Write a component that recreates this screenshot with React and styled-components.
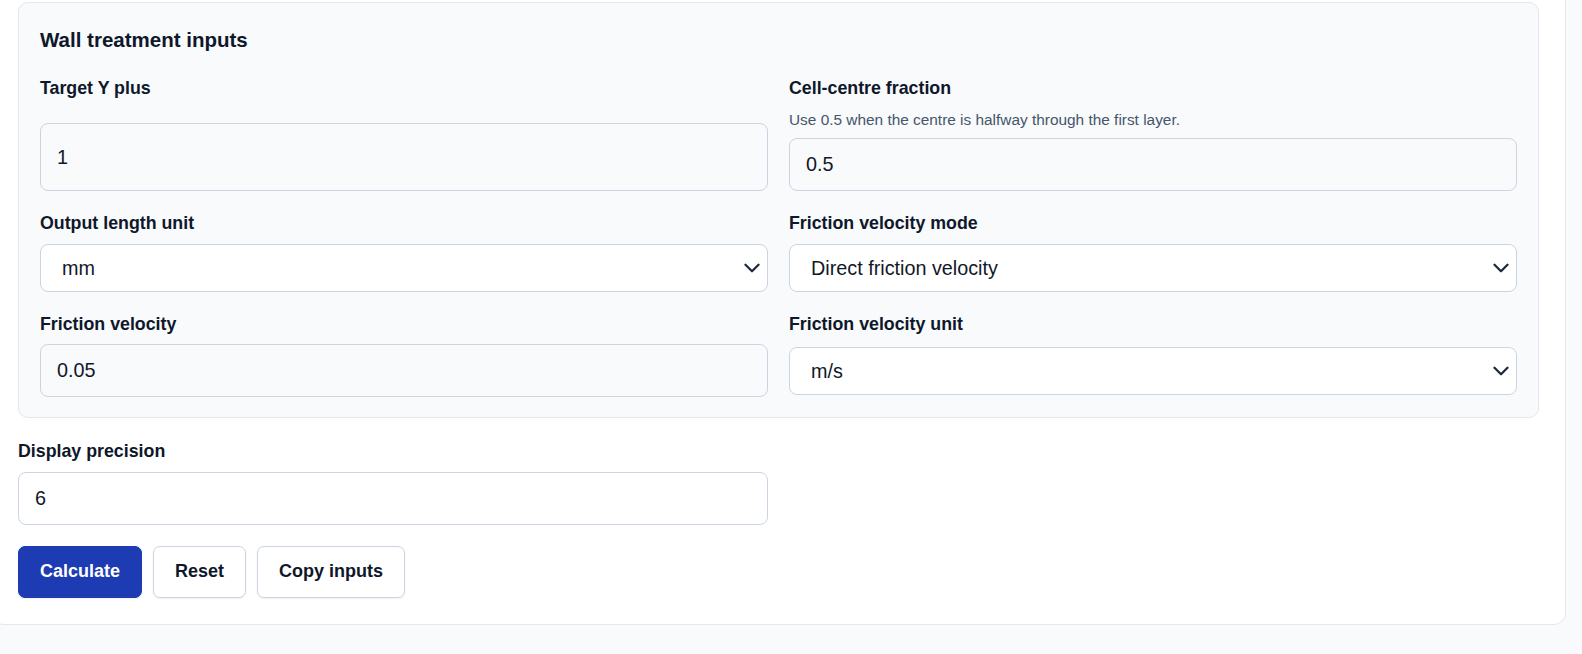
import React from "react";
import styled, { createGlobalStyle } from "styled-components";

const GlobalStyle = createGlobalStyle`
  html, body {
    margin: 0;
    padding: 0;
    background: #f8fafc;
    overflow: hidden;
  }
  body {
    font-family: "Liberation Sans", Arial, sans-serif;
    color: #0f172a;
  }
  *, *::before, *::after { box-sizing: border-box; }
`;

const Page = styled.div`
  padding: 0 16px 0 0;
  min-height: 654px;
`;

const Card = styled.section`
  margin: -25px 0 0 -9px;
  background: #ffffff;
  border: 1px solid #e2e8f0;
  border-radius: 12px;
  padding: 26px 26px 26px;
  display: grid;
  grid-template-columns: 1fr 1fr;
  column-gap: 21px;
  row-gap: 21px;
`;

const Panel = styled.div`
  grid-column: 1 / -1;
  background: #f8fafc;
  border: 1px solid #e2e8f0;
  border-radius: 10px;
  padding: 21px 21px 20px;
  display: flex;
  flex-direction: column;
  gap: 20px;
`;

const PanelTitle = styled.h3`
  margin: 0;
  font-size: 20.5px;
  font-weight: 700;
  line-height: 32px;
  color: #0f172a;
`;

const FieldGrid = styled.div`
  display: grid;
  grid-template-columns: 1fr 1fr;
  column-gap: 21px;
  row-gap: 20px;
`;

const Field = styled.label`
  display: grid;
  gap: 8px;
  min-width: 0;
`;

const Label = styled.span`
  font-size: 17.8px;
  font-weight: 700;
  line-height: 24.6px;
  color: #0f172a;
`;

const Hint = styled.span`
  font-size: 15.4px;
  line-height: 1.4;
  color: #475569;
`;

const TextInput = styled.input`
  width: 100%;
  min-height: 53px;
  padding: 0 16px;
  font-family: inherit;
  font-size: 19.8px;
  color: #111827;
  background: transparent;
  border: 1px solid #cbd5e1;
  border-radius: 8px;
  outline: none;
`;

const SelectWrap = styled.div`
  position: relative;
  align-self: start;
`;

const Select = styled.select`
  width: 100%;
  height: 48px;
  padding: 0 44px 0 21px;
  font-family: inherit;
  font-size: 19.8px;
  color: #111827;
  background: #ffffff;
  border: 1px solid #cbd5e1;
  border-radius: 8px;
  appearance: none;
  -webkit-appearance: none;
  outline: none;
`;

const Chevron = styled.svg`
  position: absolute;
  right: 8px;
  top: 50%;
  transform: translateY(-50%);
  pointer-events: none;
`;

const Actions = styled.div`
  grid-column: 1 / -1;
  display: flex;
  gap: 11px;
`;

const Button = styled.button`
  height: 52px;
  padding: 0 21px;
  font-family: inherit;
  font-size: 18px;
  font-weight: 700;
  border-radius: 7px;
  cursor: pointer;
  border: 1px solid ${(p) => (p.$primary ? "#1d3cb4" : "#cbd5e1")};
  background: ${(p) => (p.$primary ? "#1d3cb4" : "#ffffff")};
  color: ${(p) => (p.$primary ? "#ffffff" : "#0f172a")};
  box-shadow: 0 1px 2px rgba(15, 23, 42, 0.06);
`;

function SelectField({ label, value, options }) {
  return (
    <Field>
      <Label>{label}</Label>
      <SelectWrap>
        <Select defaultValue={value}>
          {options.map((o) => (
            <option key={o} value={o}>
              {o}
            </option>
          ))}
        </Select>
        <Chevron width="16" height="10" viewBox="0 0 16 10" fill="none">
          <path
            d="M1.5 1.8 L8 8.2 L14.5 1.8"
            stroke="#1e293b"
            strokeWidth="2.3"
            strokeLinecap="round"
            strokeLinejoin="round"
          />
        </Chevron>
      </SelectWrap>
    </Field>
  );
}

function InputField({ label, hint, value }) {
  return (
    <Field>
      <Label>{label}</Label>
      {hint && <Hint>{hint}</Hint>}
      <TextInput type="text" defaultValue={value} />
    </Field>
  );
}

export default function App() {
  return (
    <>
      <GlobalStyle />
      <Page>
        <Card>
          <Panel>
            <PanelTitle>Wall treatment inputs</PanelTitle>
            <FieldGrid>
              <InputField label="Target Y plus" value="1" />
              <InputField
                label="Cell-centre fraction"
                hint="Use 0.5 when the centre is halfway through the first layer."
                value="0.5"
              />
              <SelectField
                label="Output length unit"
                value="mm"
                options={["m", "mm", "µm", "in"]}
              />
              <SelectField
                label="Friction velocity mode"
                value="Direct friction velocity"
                options={["Direct friction velocity", "From wall shear stress"]}
              />
              <InputField label="Friction velocity" value="0.05" />
              <SelectField
                label="Friction velocity unit"
                value="m/s"
                options={["m/s", "ft/s"]}
              />
            </FieldGrid>
          </Panel>
          <InputField label="Display precision" value="6" />
          <Actions>
            <Button $primary>Calculate</Button>
            <Button>Reset</Button>
            <Button>Copy inputs</Button>
          </Actions>
        </Card>
      </Page>
    </>
  );
}
